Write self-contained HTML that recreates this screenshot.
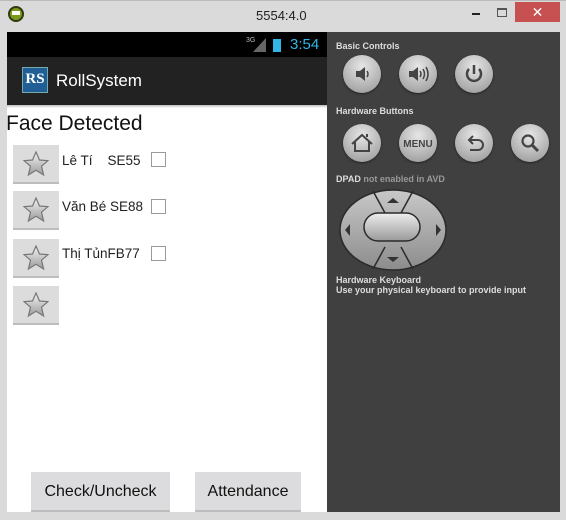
<!DOCTYPE html>
<html><head><meta charset="utf-8"><style>
*{margin:0;padding:0;box-sizing:border-box}
body{width:566px;height:520px;background:#dadada;position:relative;overflow:hidden;font-family:"Liberation Sans",sans-serif}
.a{position:absolute}
.star{position:absolute;left:13px;width:46px;height:39px;background:#dcdcdc;border-bottom:2px solid #bdbdbd}
.star svg{position:absolute;left:10px;top:6px}
.cb{position:absolute;left:151px;width:15px;height:15px;border:1px solid #9a9a9a;background:#fff}
.nm{position:absolute;left:62px;font-size:13.5px;color:#222}
.btn{position:absolute;top:472px;height:40px;background:#dcdbdd;border-bottom:2px solid #bdbdbd;font-size:16px;color:#111;text-align:center;line-height:40px}
.pl{position:absolute;color:#ddd;font-size:9px;font-weight:bold}
.cir{position:absolute;width:38px;height:38px;border-radius:50%;background:radial-gradient(circle at 50% 30%,#e6e6e6,#a8a8a8 75%,#8a8a8a);box-shadow:0 1px 2px #222}
.cir svg{position:absolute;left:0;top:0}
</style></head><body>
<div class="a" style="left:0;top:0;width:566px;height:1px;background:#bbb"></div>
<div class="a" style="left:8px;top:6px;width:16px;height:16px;border-radius:50%;background:#7a9a1c;border:2px solid #2f3a10"></div>
<div class="a" style="left:12px;top:11px;width:8px;height:4px;background:#fff"></div>
<div class="a" style="left:256px;top:8px;font-size:13px;color:#222">5554:4.0</div>
<div class="a" style="left:472px;top:13px;width:8px;height:2px;background:#222"></div>
<div class="a" style="left:497px;top:8px;width:10px;height:9px;border:1px solid #555;border-top-width:2px"></div>
<div class="a" style="left:515px;top:2px;width:45px;height:20px;background:#c75050;color:#fff;text-align:center;font-size:14px;line-height:20px">✕</div>

<div class="a" style="left:7px;top:32px;width:320px;height:480px;background:#fff"></div>
<div class="a" style="left:7px;top:32px;width:320px;height:25px;background:#000"></div>
<div class="a" style="left:246px;top:37px;font-size:7px;color:#bbb">3G</div>
<svg class="a" style="left:253px;top:38px" width="14" height="14"><polygon points="13,0 13,14 0,14" fill="#666"/></svg>
<div class="a" style="left:273px;top:39px;width:8px;height:13px;background:#33b5e5"></div>
<div class="a" style="left:290px;top:36px;font-size:15px;color:#33b5e5">3:54</div>
<div class="a" style="left:7px;top:57px;width:320px;height:48px;background:#222"></div>
<div class="a" style="left:22px;top:67px;width:26px;height:26px;background:#1f5f95;border:1px solid #7aa;color:#fff;font-family:'Liberation Serif',serif;font-size:15px;text-align:center;line-height:22px;font-weight:bold">RS</div>
<div class="a" style="left:56px;top:71px;font-size:17px;color:#fff">RollSystem</div>
<div class="a" style="left:7px;top:105px;width:320px;height:3px;background:linear-gradient(#bbb,#fff)"></div>
<div class="a" style="left:6px;top:112px;font-size:21px;color:#111">Face Detected</div>

<svg width="0" height="0" style="position:absolute"><defs><linearGradient id="sg" x1="0" y1="0" x2="0" y2="1"><stop offset="0" stop-color="#f4f4f4"/><stop offset="1" stop-color="#9a9a9a"/></linearGradient></defs></svg>
<div class="star" style="top:145px"><svg width="26" height="26" viewBox="0 0 26 26"><polygon points="13,1 16.5,9 25,9.6 18.5,15.2 20.6,24 13,19.3 5.4,24 7.5,15.2 1,9.6 9.5,9" fill="url(#sg)" stroke="#777" stroke-width="1.2"/></svg></div>
<div class="star" style="top:191px"><svg width="26" height="26" viewBox="0 0 26 26"><polygon points="13,1 16.5,9 25,9.6 18.5,15.2 20.6,24 13,19.3 5.4,24 7.5,15.2 1,9.6 9.5,9" fill="url(#sg)" stroke="#777" stroke-width="1.2"/></svg></div>
<div class="star" style="top:239px"><svg width="26" height="26" viewBox="0 0 26 26"><polygon points="13,1 16.5,9 25,9.6 18.5,15.2 20.6,24 13,19.3 5.4,24 7.5,15.2 1,9.6 9.5,9" fill="url(#sg)" stroke="#777" stroke-width="1.2"/></svg></div>
<div class="star" style="top:286px"><svg width="26" height="26" viewBox="0 0 26 26"><polygon points="13,1 16.5,9 25,9.6 18.5,15.2 20.6,24 13,19.3 5.4,24 7.5,15.2 1,9.6 9.5,9" fill="url(#sg)" stroke="#777" stroke-width="1.2"/></svg></div>
<div class="nm" style="top:153px">Lê Tí&nbsp;&nbsp;&nbsp;&nbsp;SE55</div>
<div class="nm" style="top:199px">Văn Bé SE88</div>
<div class="nm" style="top:246px">Thị TủnFB77</div>
<div class="cb" style="top:152px"></div>
<div class="cb" style="top:199px"></div>
<div class="cb" style="top:246px"></div>
<div class="btn" style="left:31px;width:139px">Check/Uncheck</div>
<div class="btn" style="left:195px;width:106px">Attendance</div>

<div class="a" style="left:327px;top:32px;width:233px;height:480px;background:#404040"></div>
<div class="pl" style="left:336px;top:41px">Basic Controls</div>
<div class="pl" style="left:336px;top:106px">Hardware Buttons</div>
<div class="pl" style="left:336px;top:174px">DPAD <span style="color:#999">not enabled in AVD</span></div>
<div class="pl" style="left:336px;top:275px">Hardware Keyboard<br>Use your physical keyboard to provide input</div>

<div class="cir" style="left:343px;top:55px"><svg width="38" height="38"><path d="M13 16h4l5-4v14l-5-4h-4z" fill="#444"/><path d="M24 16q2 3 0 6" stroke="#444" stroke-width="1.5" fill="none"/></svg></div>
<div class="cir" style="left:399px;top:55px"><svg width="38" height="38"><path d="M10 16h4l5-4v14l-5-4h-4z" fill="#444"/><path d="M21 16q2 3 0 6M24 14q3 5 0 10M27 12q4 7 0 14" stroke="#444" stroke-width="1.5" fill="none"/></svg></div>
<div class="cir" style="left:455px;top:55px"><svg width="38" height="38"><path d="M14 14a7 7 0 1 0 10 0" stroke="#444" stroke-width="2.5" fill="none"/><path d="M19 10v9" stroke="#444" stroke-width="2.5"/></svg></div>
<div class="cir" style="left:343px;top:124px"><svg width="38" height="38"><path d="M9 20l10-9 10 9M12 18v9h14v-9M24 13v-3" stroke="#444" stroke-width="2" fill="none"/></svg></div>
<div class="cir" style="left:399px;top:124px"><svg width="38" height="38"><text x="19" y="23" text-anchor="middle" font-family="Liberation Sans" font-weight="bold" font-size="10" fill="#444">MENU</text></svg></div>
<div class="cir" style="left:455px;top:124px"><svg width="38" height="38"><path d="M15 16h8a5 5 0 0 1 0 10h-8M18 12l-4 4 4 4" stroke="#444" stroke-width="2" fill="none"/></svg></div>
<div class="cir" style="left:511px;top:124px"><svg width="38" height="38"><circle cx="17" cy="17" r="5.5" stroke="#444" stroke-width="2.2" fill="none"/><path d="M21 21l6 6" stroke="#444" stroke-width="3"/></svg></div>

<svg class="a" style="left:338px;top:188px" width="110" height="84">
<defs><linearGradient id="dg" x1="0" y1="0" x2="0" y2="1"><stop offset="0" stop-color="#c8c8c8"/><stop offset="1" stop-color="#8c8c8c"/></linearGradient><linearGradient id="pg" x1="0" y1="0" x2="0" y2="1"><stop offset="0" stop-color="#eee"/><stop offset="1" stop-color="#999"/></linearGradient></defs>
<ellipse cx="55" cy="42" rx="53" ry="40" fill="url(#dg)" stroke="#2a2a2a" stroke-width="1.5"/>
<path d="M35 3l12 22M75 3l-12 22M35 81l12-22M75 81l-12-22" stroke="#2a2a2a" stroke-width="1.5"/>
<rect x="26" y="25" width="56" height="28" rx="14" fill="url(#pg)" stroke="#2a2a2a" stroke-width="1.5"/>
<polygon points="55,10 61,15 49,15" fill="#333"/><polygon points="55,74 61,69 49,69" fill="#333"/>
<polygon points="7,42 12,36 12,48" fill="#333"/><polygon points="103,42 98,36 98,48" fill="#333"/>
</svg>
</body></html>
